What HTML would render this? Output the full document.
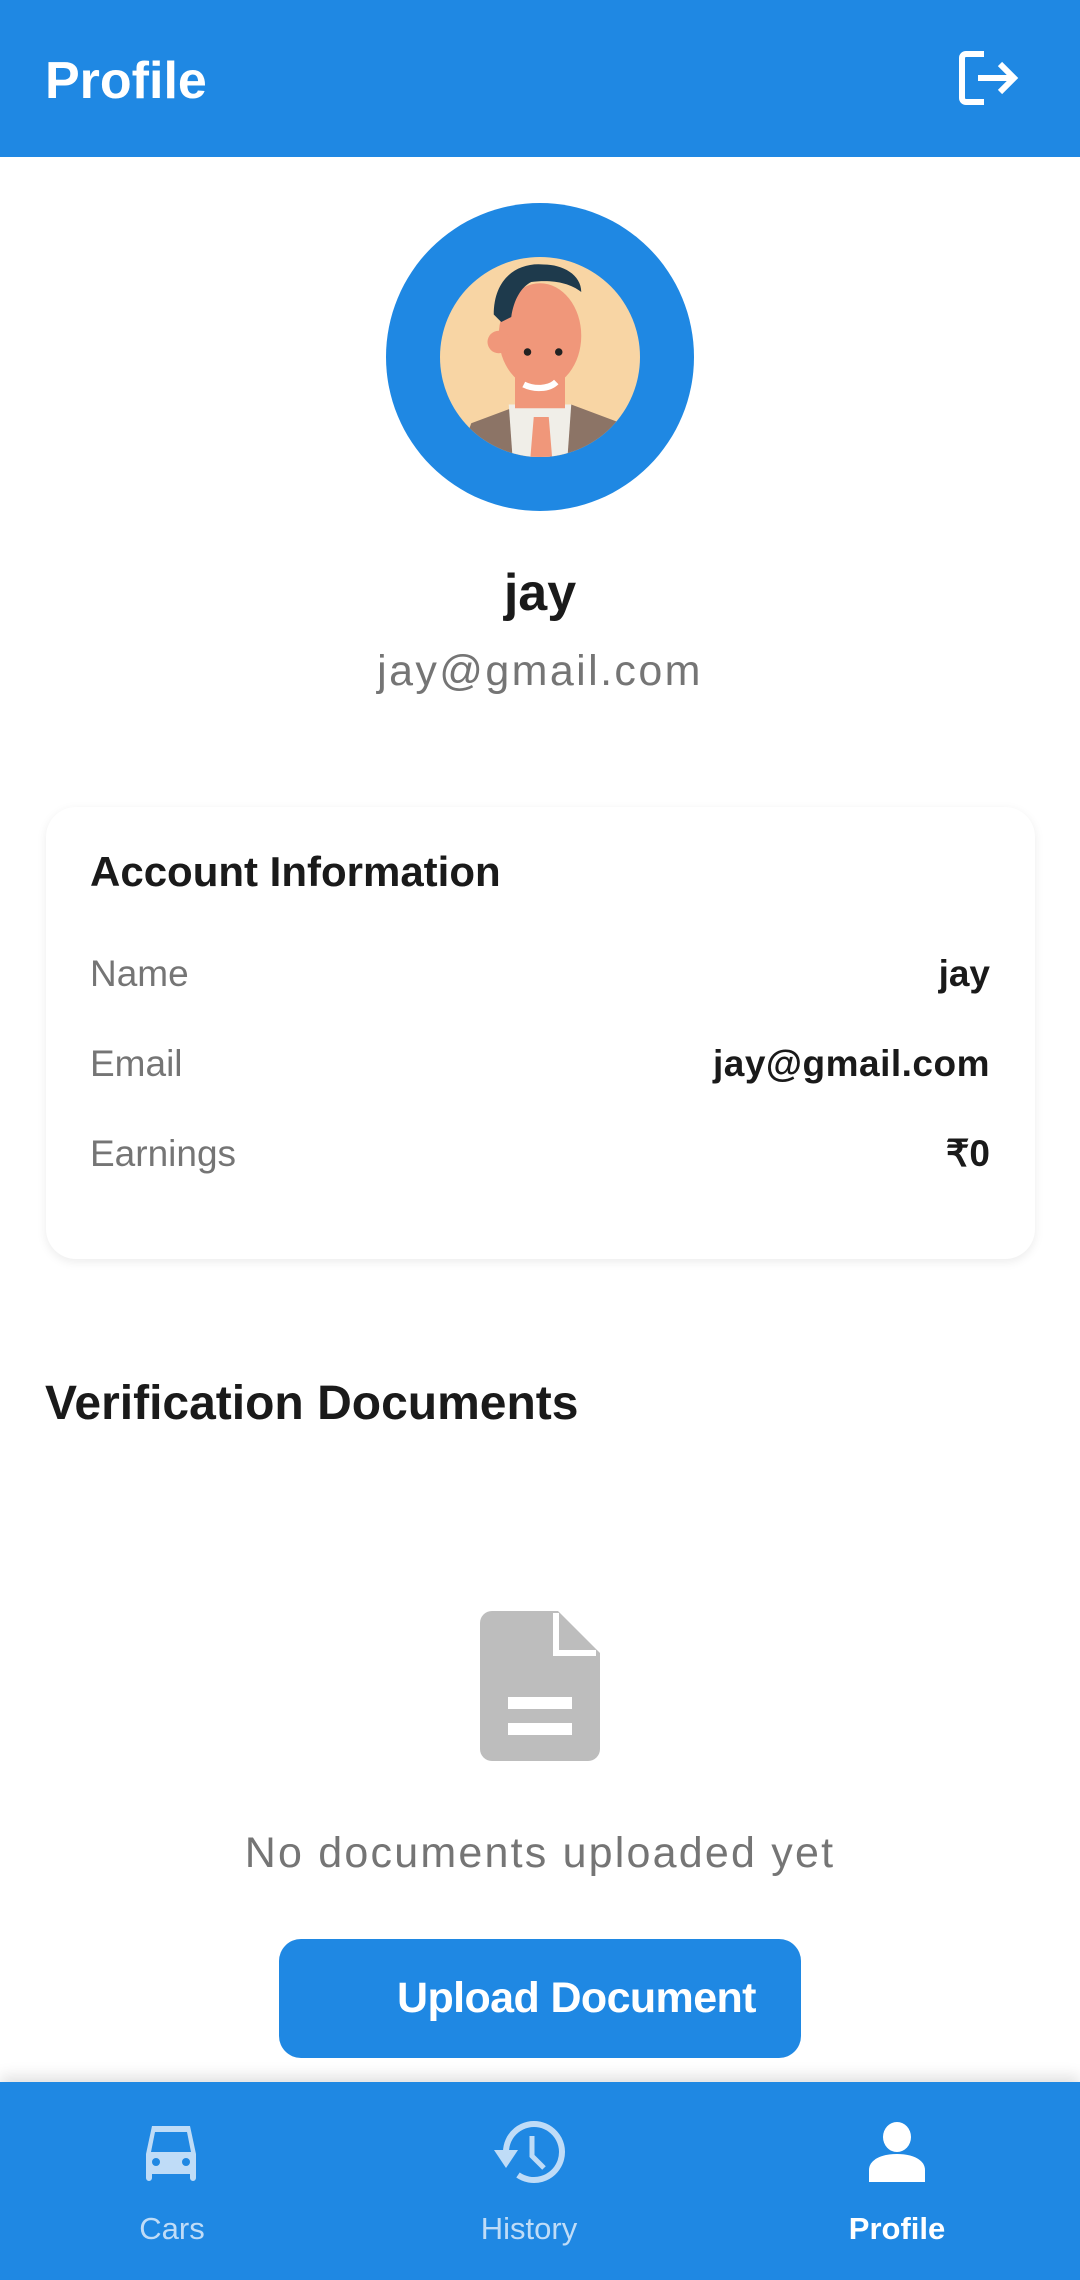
<!DOCTYPE html>
<html><head><meta charset="utf-8"><style>
*{margin:0;padding:0;box-sizing:border-box}
body{width:1080px;height:2280px;background:#fff;font-family:"Liberation Sans",sans-serif;position:relative;overflow:hidden}
.abs{position:absolute}
.hdr{left:0;top:0;width:1080px;height:157px;background:#1f88e3}
.t{white-space:nowrap;line-height:1}
.card{left:46px;top:807px;width:989px;height:452px;border-radius:30px;background:#fff;box-shadow:0 3px 10px rgba(0,0,0,0.08)}
.lab{left:90px;color:#757575;font-size:37px}
.val{right:90px;color:#1a1a1a;font-size:37px;font-weight:bold}
.nav{left:0;top:2082px;width:1080px;height:198px;background:#1f88e3;box-shadow:0 -6px 14px rgba(0,0,0,0.12)}
</style></head><body>
<div class="abs hdr"></div>
<div class="abs t" style="left:45px;top:55px;color:#fff;font-size:52px;font-weight:bold">Profile</div>
<svg class="abs" style="left:958px;top:50px" width="62" height="56" viewBox="0 0 62 56"><path d="M26 4H8a4 4 0 0 0-4 4v40a4 4 0 0 0 4 4h18" fill="none" stroke="#fff" stroke-width="6"/><path d="M20 28h36M42 14l14 14-14 14" fill="none" stroke="#fff" stroke-width="6"/></svg>

<svg class="abs" style="left:385px;top:202px" width="310" height="310" viewBox="0 0 310 310">
<circle cx="155" cy="155" r="154" fill="#1f88e3"/>
<clipPath id="c"><circle cx="155" cy="155" r="100"/></clipPath>
<circle cx="155" cy="155" r="100" fill="#f8d5a4"/>
<g clip-path="url(#c)"><g transform="translate(155 165) scale(1.25) translate(-155 -160)">
<path d="M80 260l20-55 40-15h40l40 15 20 55z" fill="#8c7466"/>
<path d="M130 190h50l-5 70h-40z" fill="#f0eee8"/>
<path d="M150 200h12l5 60h-22z" fill="#f0977a"/>
<rect x="135" y="165" width="40" height="28" fill="#f0977a"/>
<ellipse cx="155" cy="135" rx="33" ry="42" fill="#f0977a"/>
<circle cx="122" cy="140" r="9" fill="#f0977a"/>
<path d="M118 118c0-30 20-42 40-40 15 0 30 8 30 22-10-8-25-10-40-8-8 4-14 14-16 28l-8 4z" fill="#1e3a4c"/>
<path d="M142 174c8 4 20 4 26 -2" stroke="#fff" stroke-width="5" fill="none"/>
<circle cx="145" cy="148" r="3" fill="#222"/><circle cx="170" cy="148" r="3" fill="#222"/>
</g></g></svg>

<div class="abs t" style="left:0;width:1080px;text-align:center;top:567px;font-size:52px;font-weight:bold;color:#1a1a1a">jay</div>
<div class="abs t" style="left:0;width:1080px;text-align:center;top:650px;font-size:43px;color:#757575;letter-spacing:2.4px">jay@gmail.com</div>

<div class="abs card"></div>
<div class="abs t" style="left:90px;top:851px;font-size:42px;color:#1a1a1a;font-weight:bold">Account Information</div>
<div class="abs t lab" style="top:955px">Name</div><div class="abs t val" style="top:955px">jay</div>
<div class="abs t lab" style="top:1045px">Email</div><div class="abs t val" style="top:1045px;letter-spacing:0.5px">jay@gmail.com</div>
<div class="abs t lab" style="top:1135px">Earnings</div><div class="abs t val" style="top:1135px">₹0</div>

<div class="abs t" style="left:45px;top:1380px;font-size:48px;color:#1a1a1a;font-weight:bold">Verification Documents</div>

<svg class="abs" style="left:480px;top:1611px" width="120" height="150" viewBox="0 0 120 150"><path d="M12 0h66l42 42v96a12 12 0 0 1-12 12H12A12 12 0 0 1 0 138V12A12 12 0 0 1 12 0z" fill="#bdbdbd"/><path d="M76 2v40h40" fill="none" stroke="#fff" stroke-width="6"/><rect x="28" y="86" width="64" height="12" fill="#fff"/><rect x="28" y="112" width="64" height="12" fill="#fff"/></svg>

<div class="abs t" style="left:0;width:1080px;text-align:center;top:1832px;font-size:43px;color:#757575;letter-spacing:2.2px">No documents uploaded yet</div>

<div class="abs" style="left:279px;top:1939px;width:522px;height:119px;border-radius:22px;background:#1f88e3"></div>
<div class="abs t" style="left:397px;top:1977px;font-size:43px;color:#fff;font-weight:bold;letter-spacing:-0.6px">Upload Document</div>

<div class="abs nav"></div>
<svg class="abs" style="left:138px;top:2124px" width="66" height="58" viewBox="0 0 66 58"><path d="M14 2h38l6 28v24a3 3 0 0 1-6 0v-4H14v4a3 3 0 0 1-6 0V30z" fill="#bfdcf7"/><path d="M17 8h32l4 20H13z" fill="#1f88e3"/><circle cx="18" cy="38" r="4" fill="#1f88e3"/><circle cx="48" cy="38" r="4" fill="#1f88e3"/></svg>
<div class="abs t" style="left:72px;width:200px;text-align:center;top:2213px;font-size:31px;color:#bfdcf7">Cars</div>
<svg class="abs" style="left:490px;top:2118px" width="76" height="68" viewBox="0 0 76 68"><path d="M16 34A28 28 0 1 1 28 57" fill="none" stroke="#bfdcf7" stroke-width="6"/><path d="M4 32h24L16 50z" fill="#bfdcf7"/><path d="M42 18v20l12 12" fill="none" stroke="#bfdcf7" stroke-width="5"/></svg>
<div class="abs t" style="left:429px;width:200px;text-align:center;top:2213px;font-size:31px;color:#bfdcf7">History</div>
<svg class="abs" style="left:866px;top:2122px" width="62" height="60" viewBox="0 0 62 60"><ellipse cx="31" cy="15" rx="14" ry="15" fill="#fff"/><path d="M3 60V48c0-10 12-16 28-16s28 6 28 16v12z" fill="#fff"/></svg>
<div class="abs t" style="left:797px;width:200px;text-align:center;top:2213px;font-size:31px;color:#fff;font-weight:bold">Profile</div>
</body></html>
